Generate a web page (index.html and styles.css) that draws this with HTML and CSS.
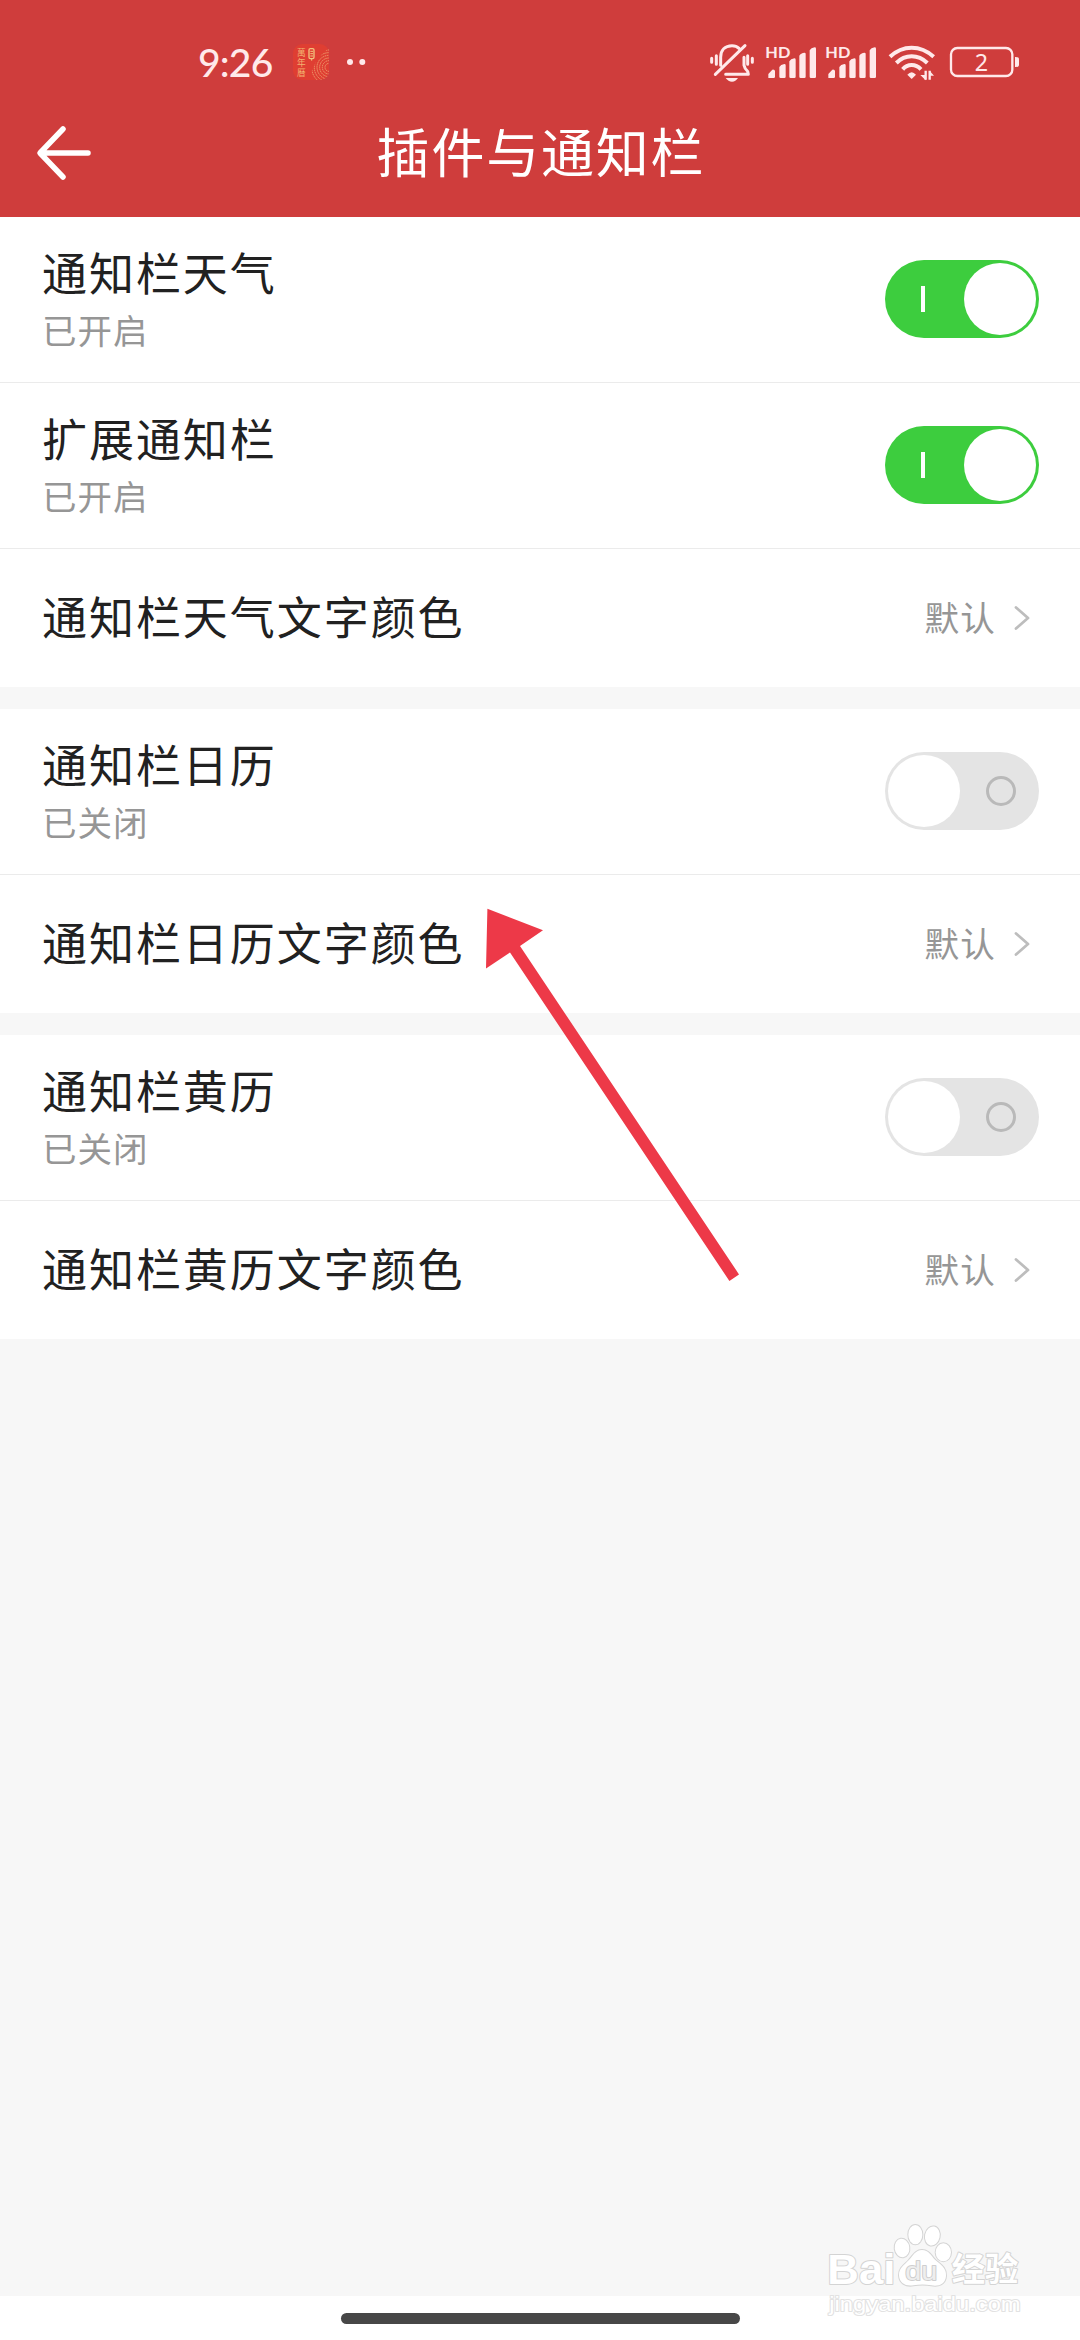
FILE: index.html
```html
<!DOCTYPE html>
<html lang="zh-CN">
<head>
<meta charset="utf-8">
<title>插件与通知栏</title>
<link rel="stylesheet" href="styles.css">
</head>
<body>
<div class="screen">
  <header class="header">
    <div class="status">
      <span class="time">9:26</span>
      <svg class="app-icon" viewBox="0 0 108 108">
        <defs><clipPath id="hill"><path d="M48 108C56 72 76 34 108 12V84Q106 104 84 108Z"/></clipPath></defs>
        <rect width="108" height="108" rx="28" fill="#df3e32"/>
        <g clip-path="url(#hill)" fill="none" stroke="#eda070" stroke-width="3" stroke-dasharray="4 2">
          <circle cx="108" cy="70" r="12"/><circle cx="108" cy="70" r="20"/><circle cx="108" cy="70" r="28"/><circle cx="108" cy="70" r="36"/><circle cx="108" cy="70" r="44"/><circle cx="108" cy="70" r="52"/>
        </g>
        <g class="app-text"><text x="12" y="37">萬</text><text x="12" y="66">年</text><text x="12" y="95">曆</text></g>
        <rect x="48" y="14" width="15" height="30" rx="4" fill="none" stroke="#f2c27e" stroke-width="4"/>
        <path d="M52 22h8M52 29h8M52 36h8M56 44v6" stroke="#f2c27e" stroke-width="3"/>
      </svg>
      <svg class="dots" viewBox="0 0 19 6"><circle cx="3" cy="3" r="3"/><circle cx="15.3" cy="3" r="3"/></svg>
      <div class="system">
        <svg class="mute" viewBox="54 0 138 210" fill="none" stroke="#ffe9ea" stroke-width="9" stroke-linecap="round" stroke-linejoin="round">
          <path d="M89 106V82C89 60 102 47 123 47C132 47 139 50 144 55M159 82V106Q161 117 170 124L172 133H104M73 133L162 47M76 77V103M62 85V97M170 77V103M184 85V97"/>
          <path d="M104 144H141Q134 155 123 155T104 144Z" fill="#ffe9ea" stroke="none"/>
        </svg>
        <svg class="signal" viewBox="222 0 156 210"><text x="223" y="84" textLength="75" lengthAdjust="spacingAndGlyphs">HD</text>
          <path id="bars" d="M232 144V132L244 119Q252 118 252 124V140Q252 144 248 144ZM265 140V111Q269 103 280 102Q284 102 284 106V140Q284 144 280 144H269Q265 144 265 140ZM295 140V94Q299 86 310 85Q314 85 314 89V140Q314 144 310 144H299Q295 144 295 140ZM325 140V77Q329 69 341 68Q344 68 344 72V140Q344 144 340 144H329Q325 144 325 140ZM356 140V61Q360 53 371 52Q375 52 375 56V140Q375 144 371 144H360Q356 144 356 140Z"/></svg>
        <svg class="signal second" viewBox="222 0 156 210"><text x="223" y="84" textLength="75" lengthAdjust="spacingAndGlyphs">HD</text><use href="#bars"/></svg>
        <svg class="wifi" viewBox="588 0 147 210" fill="none" stroke="#ffe9ea" stroke-width="12">
          <path d="M597 80Q626 53 662 53T728 80M616 99Q636 79 662 79T709 99M635 118Q646 105 662 105T690 118"/>
          <path d="M649 134Q662 119 675 134L662 147Z" fill="#ffe9ea" stroke="none"/>
          <path d="M704 122V149M716 149V122" stroke-width="7"/><path d="M688 135L704 151V135ZM716 122V137H729Z" fill="#ffe9ea" stroke="none"/>
        </svg>
        <svg class="battery" viewBox="774 0 213 210">
          <rect x="780" y="54" width="184" height="84" rx="19" fill="none" stroke="#ffe9ea" stroke-width="7"/>
          <path d="M972 81Q984 80 984 88V104Q984 112 972 111Z"/><text x="871" y="123" text-anchor="middle">2</text>
        </svg>
      </div>
    </div>
    <div class="titlebar">
      <svg class="back" viewBox="0 0 56 56"><path d="M27 4L4 28L27 52M5 28H52" fill="none" stroke="#fff" stroke-width="5.5" stroke-linecap="round" stroke-linejoin="round"/></svg>
      <h1>插件与通知栏</h1>
    </div>
  </header>

  <main class="groups">
    <section class="group">
      <div class="row tall"><div class="label"><p class="name">通知栏天气</p><p class="state">已开启</p></div><span class="toggle on"><i class="mark"></i><i class="knob"></i></span></div>
      <div class="row tall"><div class="label"><p class="name">扩展通知栏</p><p class="state">已开启</p></div><span class="toggle on"><i class="mark"></i><i class="knob"></i></span></div>
      <div class="row link"><p class="name">通知栏天气文字颜色</p><span class="value">默认</span><svg class="chevron" viewBox="0 0 16 26"><path d="M2 2.5L14 13L2 23.5"/></svg></div>
    </section>
    <section class="group">
      <div class="row tall"><div class="label"><p class="name">通知栏日历</p><p class="state">已关闭</p></div><span class="toggle"><i class="knob"></i><i class="ring"></i></span></div>
      <div class="row link"><p class="name">通知栏日历文字颜色</p><span class="value">默认</span><svg class="chevron" viewBox="0 0 16 26"><path d="M2 2.5L14 13L2 23.5"/></svg></div>
    </section>
    <section class="group">
      <div class="row tall"><div class="label"><p class="name">通知栏黄历</p><p class="state">已关闭</p></div><span class="toggle"><i class="knob"></i><i class="ring"></i></span></div>
      <div class="row link"><p class="name">通知栏黄历文字颜色</p><span class="value">默认</span><svg class="chevron" viewBox="0 0 16 26"><path d="M2 2.5L14 13L2 23.5"/></svg></div>
    </section>
  </main>

  <footer class="nav"><span class="handle"></span></footer>

  <svg class="pointer" viewBox="486 908 254 374"><path d="M487.4 908.8L543 930.3L520 946L739 1274.4L729.4 1281L510 952.5L486 968.6Z" fill="#ed3948"/></svg>

  <svg class="watermark" viewBox="0 0 840 420">
    <g class="wm-shape">
      <text class="wm-bai" x="82" y="251" textLength="204" lengthAdjust="spacingAndGlyphs">Bai</text>
      <ellipse cx="306" cy="144" rx="22" ry="28" transform="rotate(-8 306 144)"/>
      <ellipse cx="346" cy="104" rx="21" ry="29"/>
      <ellipse cx="397" cy="108" rx="22" ry="29" transform="rotate(12 397 108)"/>
      <ellipse cx="430" cy="157" rx="23" ry="27"/>
      <path d="M366 150C386 150 394 168 406 180C422 194 440 204 438 228C436 254 414 260 394 256C374 252 358 253 340 256C318 260 298 250 297 226C296 204 314 194 326 181C338 168 346 150 366 150Z"/>
      <text class="wm-du" x="316" y="240" textLength="96" lengthAdjust="spacingAndGlyphs">du</text>
      <text class="wm-cn" x="455" y="244" textLength="200" lengthAdjust="spacingAndGlyphs">经验</text>
      <text class="wm-url" x="88" y="332" textLength="574" lengthAdjust="spacingAndGlyphs">jingyan.baidu.com</text>
    </g>
  </svg>
</div>
</body>
</html>
```
FILE: styles.css
```css
* { box-sizing: border-box; }
body { margin: 0; font-family: "Noto Sans CJK SC", sans-serif; }
p, h1 { margin: 0; font-weight: 400; }
svg { display: block; flex: none; }

.screen {
  position: relative;
  display: flex;
  flex-direction: column;
  width: 1080px;
  height: 2340px;
  background: #f7f7f7;
  overflow: hidden;
}

.header { height: 217px; background: #cf3d3c; }
.status {
  display: flex;
  align-items: center;
  height: 124px;
  padding-left: 198px;
}
.time {
  width: 95px;
  color: #ffe9ea;
  font: 500 39px/48px Lato, sans-serif;
  letter-spacing: -0.8px;
}
.app-icon { width: 36px; height: 36px; }
.app-text { fill: #f2b070; font-size: 26px; }
.dots { width: 19px; height: 6px; margin-left: 18px; fill: #ffe9ea; }
.system {
  display: flex;
  height: 70px;
  margin: 6px 0 0 343px;
}
.mute { width: 46px; height: 70px; }
.signal { width: 52px; height: 70px; margin-left: 10px; fill: #ffe9ea; }
.signal.second { margin-left: 8px; }
.signal text { font: 700 48px Lato, sans-serif; }
.wifi { width: 49px; height: 70px; margin-left: 10px; }
.battery { width: 71px; height: 70px; margin-left: 13px; fill: #ffe9ea; }
.battery text { font: 400 70px "Noto Sans", sans-serif; }

.titlebar {
  display: grid;
  grid-template-columns: 140px 1fr 140px;
  align-items: start;
  height: 60px;
}
.back { width: 56px; height: 56px; margin: 1px 0 0 36px; }
.titlebar h1 {
  margin-top: -4px;
  padding-left: 2px;
  color: #fff;
  font-size: 53px;
  line-height: 60px;
  letter-spacing: 1.8px;
  text-align: center;
}

.groups {
  display: flex;
  flex: 1;
  flex-direction: column;
  gap: 22px;
}
.group { background: #fff; }
.row { display: flex; padding: 0 41px 0 42px; }
.tall { height: 166px; border-bottom: 1px solid #ebebeb; }
.link { height: 138px; align-items: center; padding-right: 50px; }
.label, .link .name { flex: 1; }
.label { padding-top: 25px; }
.name { color: #212121; font-size: 45px; line-height: 60px; letter-spacing: 1.95px; }
.link .name { padding-bottom: 5px; }
.state { margin-top: 2px; color: #969696; font-size: 34.5px; line-height: 50px; letter-spacing: 1px; }
.value { padding-bottom: 5px; color: #969696; font-size: 34.5px; letter-spacing: 1.2px; }
.chevron { width: 16px; height: 26px; margin-left: 18px; margin-top: -1px; }
.chevron path { fill: none; stroke: #bdbdbd; stroke-width: 2.8; stroke-linecap: round; stroke-linejoin: round; }

.toggle {
  display: flex;
  align-items: center;
  width: 154px;
  height: 78px;
  margin-top: 43px;
  padding: 0 3px;
  border-radius: 39px;
  background: #e4e4e4;
}
.toggle.on { background: #3dcd3e; }
.knob { width: 72px; height: 72px; border-radius: 50%; background: #fff; }
.mark { width: 4px; height: 26px; margin: 0 39px 0 33px; background: #fff; }
.ring { width: 30px; height: 30px; margin-left: 26px; border: 3px solid #b9b9b9; border-radius: 50%; }

.nav {
  display: flex;
  justify-content: center;
  height: 44px;
  padding-top: 17px;
  background: #fff;
}
.handle { width: 399px; height: 11px; border-radius: 6px; background: #474747; }

.pointer { position: absolute; left: 486px; top: 908px; width: 254px; height: 374px; }
.watermark { position: absolute; left: 800px; top: 2200px; width: 280px; height: 140px; }
.wm-shape { fill: #fff; stroke: #d4d4d4; stroke-width: 6px; paint-order: stroke; stroke-linejoin: round; }
.wm-bai { font: 700 128px "Liberation Sans", sans-serif; }
.wm-du { font: 400 80px "Liberation Sans", sans-serif; fill: #eee; stroke: #cfcfcf; }
.wm-cn { font: 700 98px "Noto Sans CJK SC", sans-serif; }
.wm-url { font: 400 62px "Liberation Sans", sans-serif; stroke: #e2e2e2; }
```
